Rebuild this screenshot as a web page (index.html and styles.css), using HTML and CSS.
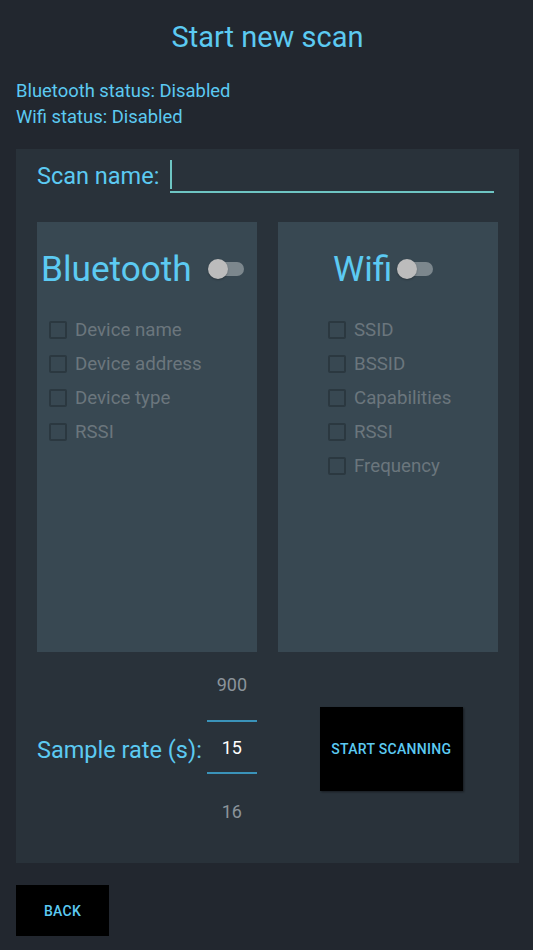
FILE: index.html
```html
<!DOCTYPE html>
<html lang="en">
<head>
<meta charset="utf-8">
<title>Start new scan</title>
<link rel="stylesheet" href="styles.css">
</head>
<body>
  <h1 class="title">Start new scan</h1>
  <div class="status">
    <div class="status-line">Bluetooth status: Disabled</div>
    <div class="status-line">Wifi status: Disabled</div>
  </div>

  <main class="panel">
    <div class="name-row">
      <label class="name-label">Scan name:</label>
      <div class="name-input"><span class="cursor"></span></div>
    </div>

    <div class="cards">
      <section class="card">
        <div class="card-head card-head--bt">
          <span class="card-title">Bluetooth</span>
          <span class="switch switch--bt"><span class="thumb"></span></span>
        </div>
        <ul class="checks checks--bt">
          <li class="check"><span class="box"></span>Device name</li>
          <li class="check"><span class="box"></span>Device address</li>
          <li class="check"><span class="box"></span>Device type</li>
          <li class="check"><span class="box"></span>RSSI</li>
        </ul>
      </section>
      <section class="card">
        <div class="card-head card-head--wifi">
          <span class="card-title">Wifi</span>
          <span class="switch switch--wifi"><span class="thumb"></span></span>
        </div>
        <ul class="checks checks--wifi">
          <li class="check"><span class="box"></span>SSID</li>
          <li class="check"><span class="box"></span>BSSID</li>
          <li class="check"><span class="box"></span>Capabilities</li>
          <li class="check"><span class="box"></span>RSSI</li>
          <li class="check"><span class="box"></span>Frequency</li>
        </ul>
      </section>
    </div>

    <div class="rate-row">
      <span class="rate-label">Sample rate (s):</span>
      <div class="picker">
        <div class="picker-item picker-item--top">900</div>
        <div class="picker-line"></div>
        <div class="picker-item picker-item--current">15</div>
        <div class="picker-line"></div>
        <div class="picker-item picker-item--bottom">16</div>
      </div>
      <button class="btn btn--start">START SCANNING</button>
    </div>
  </main>

  <button class="btn btn--back">BACK</button>
</body>
</html>
```
FILE: styles.css
```css
* { box-sizing: border-box; }

html, body {
  margin: 0;
  padding: 0;
}

body {
  background: #22272f;
  font-family: Roboto, "Noto Sans", "Liberation Sans", sans-serif;
  color: #5ccaf2;
  width: 533px;
  height: 950px;
  overflow: hidden;
  padding: 0 14px 0 16px;
}

.title {
  margin: 0;
  padding-top: 19px;
  font-size: 29px;
  font-weight: 400;
  line-height: 36px;
  text-align: center;
}

.status {
  margin-top: 23px;
  font-size: 18.4px;
  line-height: 26px;
}

.panel {
  margin-top: 19px;
  background: #29323a;
  padding: 11px 21px 31px 21px;
}

.name-row {
  display: flex;
  align-items: flex-end;
}

.name-label {
  font-size: 23.5px;
  line-height: 33px;
}

.name-input {
  flex: 1;
  margin-left: 11px;
  margin-right: 4px;
  height: 33px;
  border-bottom: 2px solid #6ec5c3;
  display: flex;
  align-items: flex-start;
}

.cursor {
  width: 2px;
  height: 29px;
  background: #6ec5c3;
}

.cards {
  margin-top: 29px;
  display: flex;
  gap: 21px;
}

.card {
  width: 220px;
  height: 430px;
  background: #384852;
  padding-top: 27px;
}

.card-head {
  display: flex;
  align-items: center;
  height: 40px;
}

.card-head--bt { padding-left: 4px; }
.card-head--wifi { padding-left: 55px; }

.card-title {
  font-size: 35.2px;
  line-height: 40px;
}

.switch {
  position: relative;
  width: 36px;
  height: 20px;
  flex: none;
}

.switch--bt { margin-left: 16px; }
.switch--wifi { margin-left: 5px; }

.switch::before {
  content: "";
  position: absolute;
  left: 2px;
  right: 0;
  top: 3px;
  height: 14px;
  border-radius: 7px;
  background: #7c878d;
}

.thumb {
  position: absolute;
  left: 0;
  top: 0;
  width: 20px;
  height: 20px;
  border-radius: 50%;
  background: #bcbcbc;
  box-shadow: 0 1px 2px rgba(0, 0, 0, 0.25);
}

.checks {
  list-style: none;
  margin: 24px 0 0 0;
  padding: 0;
}

.checks--bt { padding-left: 12px; }
.checks--wifi { padding-left: 50px; }

.check {
  display: flex;
  align-items: center;
  height: 34px;
  font-size: 18.7px;
  color: #6b767d;
}

.box {
  width: 18px;
  height: 18px;
  border: 2px solid #2b3840;
  border-radius: 2px;
  margin-right: 8px;
  flex: none;
}

.rate-row {
  margin-top: 13px;
  display: flex;
  align-items: center;
}

.rate-label {
  font-size: 23.5px;
  line-height: 30px;
  padding-top: 3px;
}

.picker {
  width: 50px;
  margin-left: 5px;
  display: flex;
  flex-direction: column;
  text-align: center;
  font-size: 18px;
}

.picker-item {
  height: 40px;
  line-height: 40px;
  color: #8b949a;
}

.picker-item--current {
  height: 50px;
  line-height: 52px;
  color: #ffffff;
}

.picker-item--bottom { margin-top: 18px; }

.picker-line {
  height: 2px;
  background: #3a93b9;
}

.picker-item--top + .picker-line { margin-top: 15px; }

.btn {
  background: #000000;
  border: none;
  color: #5ccaf2;
  font-family: Roboto, "Noto Sans", "Liberation Sans", sans-serif;
  font-size: 14px;
  font-weight: 500;
  letter-spacing: 0.3px;
  padding: 0;
  cursor: pointer;
}

.btn--start {
  margin-left: 63px;
  width: 143px;
  height: 84px;
  box-shadow: 1px 1px 2px rgba(0, 0, 0, 0.45);
}

.btn--back {
  display: block;
  margin-top: 22px;
  width: 93px;
  height: 51px;
}
```
